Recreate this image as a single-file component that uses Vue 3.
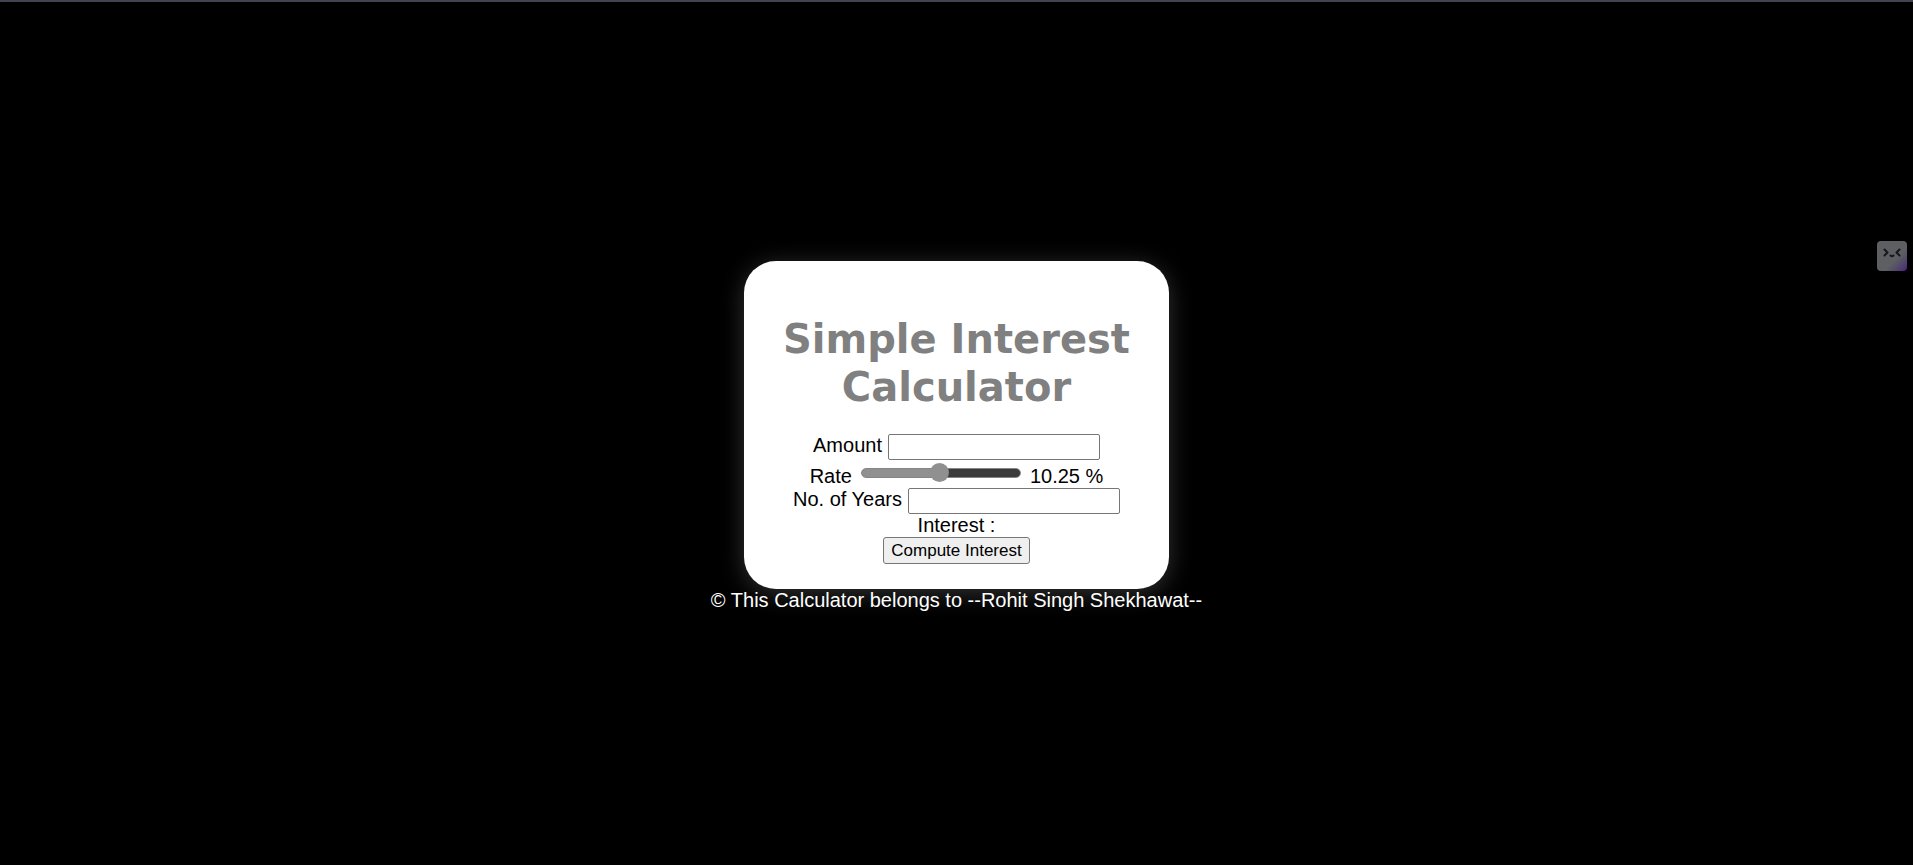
<script setup>
import { computed, ref } from 'vue'

const MIN_RATE = 1
const MAX_RATE = 20

const amount = ref('')
const rate = ref(10.25)
const years = ref('')
const interest = ref('')

const filled = computed(() => `${((rate.value - MIN_RATE) / (MAX_RATE - MIN_RATE)) * 100}%`)

function compute() {
  const total = (Number(amount.value) * Number(years.value) * rate.value) / 100
  interest.value = total ? total.toFixed(2) : ''
}
</script>

<template>
  <div class="page">
    <main class="card">
      <h1 class="title">Simple Interest Calculator</h1>
      <form @submit.prevent="compute">
        <div class="row">
          <label for="amount">Amount</label>
          <input id="amount" v-model="amount" class="field" type="text" inputmode="decimal" />
        </div>
        <div class="row rate-row">
          <label for="rate">Rate</label>
          <input
            id="rate"
            v-model.number="rate"
            class="slider"
            type="range"
            :min="MIN_RATE"
            :max="MAX_RATE"
            step="0.25"
            :style="{ '--filled': filled }"
          />
          <output for="rate">{{ rate }} %</output>
        </div>
        <div class="row">
          <label for="years">No. of Years</label>
          <input id="years" v-model="years" class="field" type="text" inputmode="numeric" />
        </div>
        <div class="row">Interest : {{ interest }}</div>
        <div class="row">
          <button class="compute" type="submit">Compute Interest</button>
        </div>
      </form>
    </main>
    <footer class="footer">© This Calculator belongs to --Rohit Singh Shekhawat--</footer>
    <button class="buddy" type="button" aria-label="Assistant">
      <svg viewBox="0 0 30 30" aria-hidden="true">
        <defs>
          <linearGradient id="buddy-fill" x1="0" y1="0" x2="1" y2="1">
            <stop offset="0.62" stop-color="#5d5f63" />
            <stop offset="0.82" stop-color="#51466a" />
            <stop offset="1" stop-color="#4b2086" />
          </linearGradient>
        </defs>
        <rect width="30" height="30" rx="4" fill="url(#buddy-fill)" />
        <g fill="none" stroke="#15171f" stroke-width="2" stroke-linecap="round" stroke-linejoin="round">
          <path d="M7.5 8.5 10.5 11.5 7.5 14.5" />
          <path d="M22.5 8.5 19.5 11.5 22.5 14.5" />
          <path d="M13.5 14.5Q15 16 16.5 14.5" />
        </g>
      </svg>
    </button>
  </div>
</template>

<style>
body {
  margin: 0;
  background: #000;
}
</style>

<style scoped>
.page {
  box-sizing: border-box;
  min-height: 100vh;
  padding-top: 6px;
  border-top: 2px solid #41434e;
  display: flex;
  flex-direction: column;
  align-items: center;
  justify-content: center;
  background: #000;
  color: #000;
  font: 20px/23px "Liberation Sans", Arial, sans-serif;
}

.card {
  box-sizing: border-box;
  width: 425px;
  max-width: 100%;
  padding: 25px;
  border-radius: 32px;
  background: #fff;
  box-shadow: 0 4px 24px rgba(255, 255, 255, 0.2);
}

.title {
  margin: 29px 0 23px;
  color: gray;
  font: bold 40px/48px Verdana, "DejaVu Sans", sans-serif;
  text-align: center;
}

.row {
  display: flex;
  align-items: flex-start;
  justify-content: center;
  gap: 6px;
}

.rate-row {
  align-items: flex-end;
  gap: 9px;
  height: 28px;
}

.field {
  box-sizing: border-box;
  width: 212px;
  height: 26px;
  margin: 0;
  padding: 1px 2px;
  border: 1px solid #767676;
  border-radius: 2px;
  background: #fff;
  font: 16px "Liberation Sans", Arial, sans-serif;
}

.slider {
  appearance: none;
  width: 160px;
  height: 20px;
  margin: 0 0 5px;
  background: transparent;
}

.slider::-webkit-slider-runnable-track {
  box-sizing: border-box;
  height: 10px;
  border: 1px solid #858585;
  border-radius: 5px;
  background: linear-gradient(to right, #909090 var(--filled), #3b3b3b var(--filled));
}

.slider::-webkit-slider-thumb {
  appearance: none;
  width: 19px;
  height: 19px;
  margin-top: -6px;
  border-radius: 50%;
  background: #909090;
}

.compute {
  box-sizing: border-box;
  height: 27px;
  margin: 0;
  padding: 1px 7px;
  border: 1px solid #767676;
  border-radius: 3px;
  background: #efefef;
  color: #000;
  font: 17px "Liberation Sans", Arial, sans-serif;
}

.footer {
  z-index: 1;
  color: #fff;
  text-align: center;
}

.buddy {
  position: absolute;
  top: 241px;
  right: 6px;
  width: 30px;
  height: 30px;
  padding: 0;
  border: 0;
  background: none;
}

.buddy svg {
  display: block;
}
</style>
